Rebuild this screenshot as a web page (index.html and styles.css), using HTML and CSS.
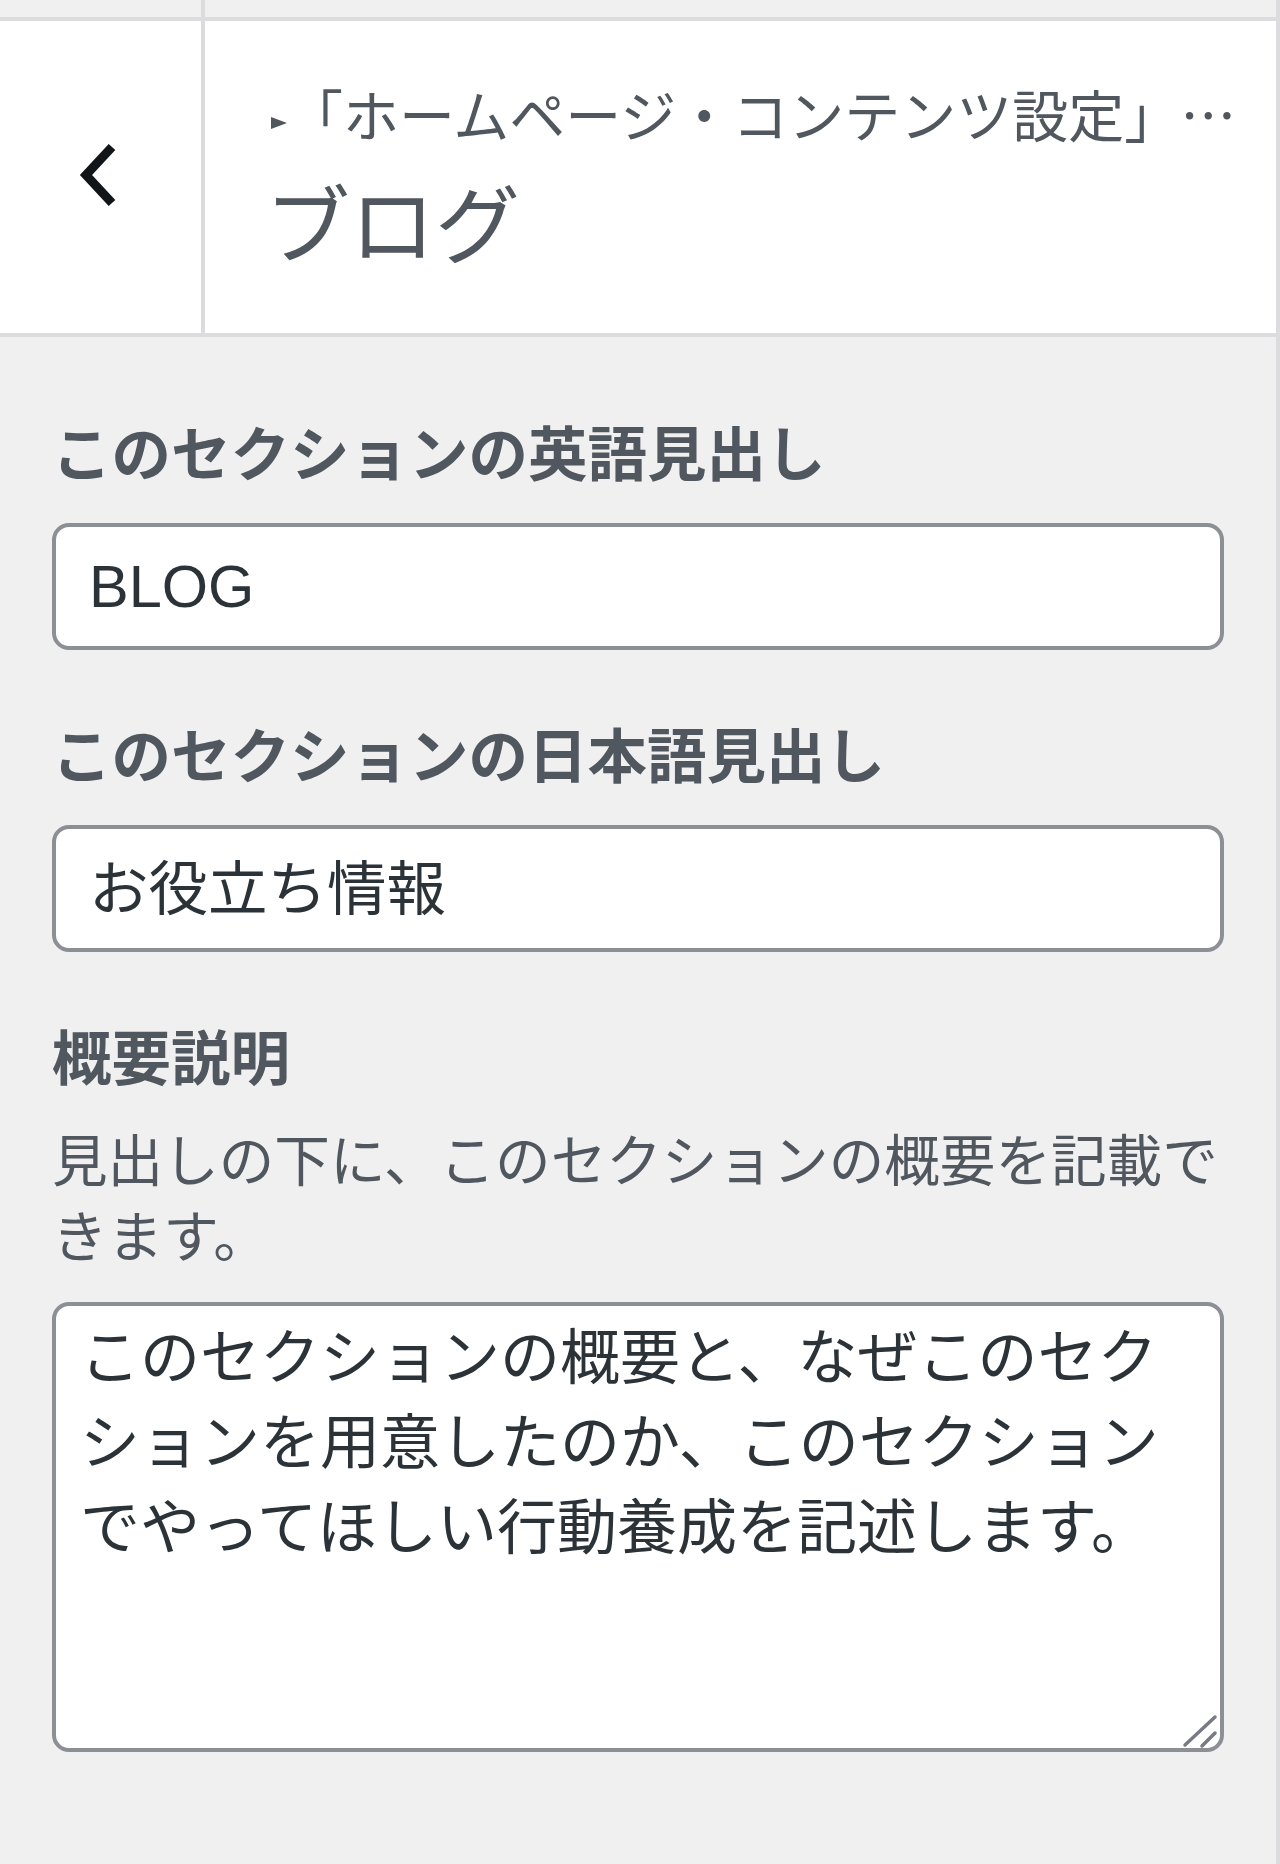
FILE: index.html
```html
<!DOCTYPE html>
<html lang="ja">
<head>
    <meta charset="UTF-8">
    <meta name="viewport" content="width=device-width, initial-scale=1.0">
    <title>ブログ - カスタマイズ</title>
    <link rel="stylesheet" href="styles.css">
</head>
<body>
    <div class="panel">
        <div class="section-head">
            <button class="back-btn" aria-label="戻る">
                <svg width="40" height="64" viewBox="0 0 40 64">
                    <polyline points="33,4 7,32 33,60" fill="none" stroke="#111518" stroke-width="9" stroke-linejoin="miter"/>
                </svg>
            </button>
            <div class="section-title">
                <span class="crumb">「ホームページ・コンテンツ設定」…</span>
                <h3>ブログ</h3>
            </div>
        </div>

        <ul class="controls">
            <li class="control">
                <label class="control-title" for="titleEn">このセクションの英語見出し</label>
                <input type="text" id="titleEn" class="text-input" value="BLOG">
            </li>
            <li class="control">
                <label class="control-title" for="titleJa">このセクションの日本語見出し</label>
                <input type="text" id="titleJa" class="text-input text-input-ja" value="お役立ち情報">
            </li>
            <li class="control">
                <label class="control-title" for="summary">概要説明</label>
                <p class="description">見出しの下に、このセクションの概要を記載できます。</p>
                <div class="textarea-wrap">
                    <textarea id="summary" class="text-area">このセクションの概要と、なぜこのセクションを用意したのか、このセクションでやってほしい行動養成を記述します。</textarea>
                    <svg class="grip" width="36" height="36" viewBox="0 0 36 36">
                        <line x1="3" y1="32" x2="33" y2="4" stroke="#787c82" stroke-width="3.5" stroke-linecap="round"/>
                        <line x1="20" y1="33" x2="33" y2="20" stroke="#787c82" stroke-width="3.5" stroke-linecap="round"/>
                    </svg>
                </div>
            </li>
        </ul>
    </div>
</body>
</html>
```

FILE: styles.css
```css
* {
    margin: 0;
    padding: 0;
    box-sizing: border-box;
}

body {
    font-family: "Noto Sans CJK JP", "Liberation Sans", sans-serif;
    background: #f0f0f1;
    color: #50575e;
}

.panel {
    width: 1280px;
    min-height: 100vh;
    border-right: 4px solid #dcdcde;
}

/* header: back button + breadcrumb/title */
.section-head {
    display: flex;
    border-bottom: 4px solid #dcdcde;
}

.back-btn {
    width: 205px;
    flex-shrink: 0;
    border: none;
    border-right: 4px solid #dcdcde;
    background: linear-gradient(#f0f0f1 0 17px, #dcdcde 17px 21px, #fff 21px);
    padding-top: 21px;
    display: flex;
    align-items: center;
    justify-content: center;
    cursor: pointer;
}

.back-btn svg {
    margin: 0 4px 4px 0;
}

.section-title {
    flex: 1;
    min-width: 0;
    background: linear-gradient(#f0f0f1 0 17px, #dcdcde 17px 21px, #fff 21px);
    padding: 73px 30px 62px 66px;
}

.crumb {
    display: block;
    font-size: 56px;
    line-height: 80px;
    white-space: nowrap;
    overflow: hidden;
}

.crumb::before {
    content: "";
    display: inline-block;
    border-left: 16px solid #50575e;
    border-top: 6.5px solid transparent;
    border-bottom: 6.5px solid transparent;
    margin: 0 0 8px 0;
}

.section-title h3 {
    margin: 16px 0 0 -6px;
    font-size: 85px;
    font-weight: 400;
    line-height: 102px;
}

/* controls */
.controls {
    list-style: none;
    padding: 61px 52px 40px;
}

.control {
    margin-bottom: 50px;
}

.control-title {
    display: block;
    font-size: 59.5px;
    font-weight: 700;
    line-height: 104px;
    margin-bottom: 21px;
}

.text-input {
    display: block;
    width: 100%;
    height: 127px;
    padding: 0 33px;
    border: 4px solid #8c8f94;
    border-radius: 17px;
    background: #fff;
    font-family: "Liberation Sans", "Noto Sans CJK JP", sans-serif;
    font-size: 59.5px;
    color: #2c3338;
    outline: none;
}

.text-input-ja {
    padding-bottom: 10px;
}

.description {
    font-size: 55.6px;
    line-height: 76px;
    margin: -8px 0 31px;
}

.textarea-wrap {
    position: relative;
}

.text-area {
    display: block;
    width: 100%;
    height: 450px;
    padding: 4px 24px;
    border: 4px solid #8c8f94;
    border-radius: 17px;
    background: #fff;
    font-family: "Noto Sans CJK JP", "Liberation Sans", sans-serif;
    font-size: 60px;
    line-height: 85px;
    color: #2c3338;
    resize: none;
    outline: none;
    overflow: hidden;
}

.grip {
    position: absolute;
    right: 6px;
    bottom: 3px;
}
```
